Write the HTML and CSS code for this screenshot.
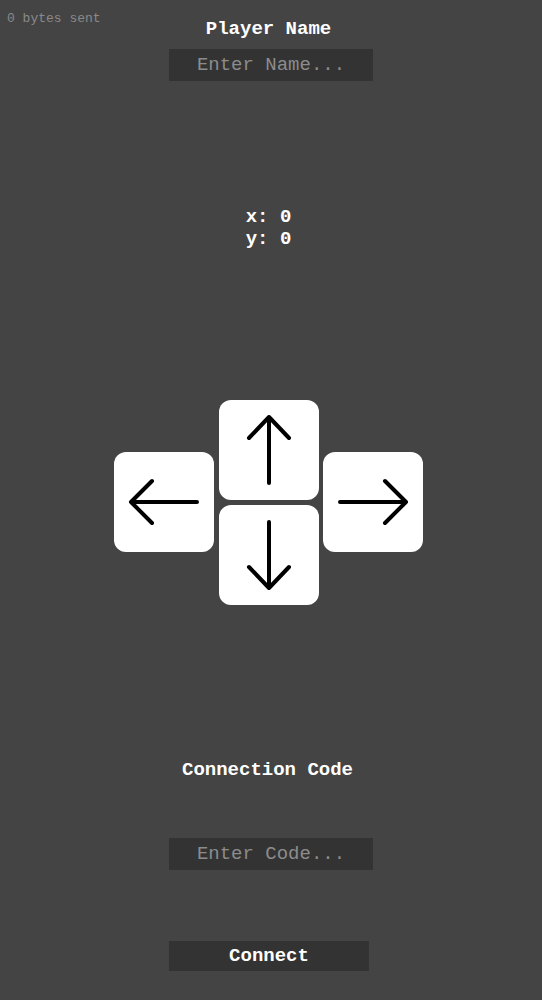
FILE: index.html
```html
<!DOCTYPE html>
<html>
<head>
<meta charset="utf-8">
<link rel="stylesheet" href="styles.css">
</head>
<body>
<div class="bytes">0 bytes sent</div>
<main class="page">
  <section class="group name-group">
    <div class="label">Player Name</div>
    <input class="field" type="text" placeholder="Enter Name...">
  </section>
  <section class="coords">
    <div>x: 0</div>
    <div>y: 0</div>
  </section>
  <section class="pad">
    <div class="col side">
      <button class="key" aria-label="left">
        <svg viewBox="0 0 100 100"><path d="M83 50H17M38 29L17 50L38 71"/></svg>
      </button>
    </div>
    <div class="col mid">
      <button class="key" aria-label="up">
        <svg viewBox="0 0 100 100"><path d="M50 83V17M30 38L50 17L70 38"/></svg>
      </button>
      <button class="key" aria-label="down">
        <svg viewBox="0 0 100 100"><path d="M50 17V83M30 62L50 83L70 62"/></svg>
      </button>
    </div>
    <div class="col side">
      <button class="key" aria-label="right">
        <svg viewBox="0 0 100 100"><path d="M17 50H83M62 29L83 50L62 71"/></svg>
      </button>
    </div>
  </section>
  <section class="group code-group">
    <div class="label code-label">Connection Code</div>
    <input class="field code-field" type="text" placeholder="Enter Code...">
    <button class="connect">Connect</button>
  </section>
</main>
</body>
</html>
```
FILE: styles.css
```css
html, body {
  margin: 0;
  padding: 0;
  background: #444444;
  font-family: "Liberation Mono", "Courier New", monospace;
  color: #ffffff;
}
body {
  width: 542px;
  height: 1000px;
  position: relative;
  overflow: hidden;
}
.bytes {
  position: absolute;
  left: 7px;
  top: 11px;
  font-size: 13px;
  line-height: 16px;
  color: #8a8a8a;
}
.page {
  display: flex;
  flex-direction: column;
  align-items: center;
  padding-top: 18px;
}
.group {
  display: flex;
  flex-direction: column;
  align-items: center;
}
.label {
  font-size: 19px;
  line-height: 22px;
  font-weight: bold;
  margin-left: -5px;
}
.code-label {
  margin-left: -7px;
}
.field {
  box-sizing: border-box;
  width: 204px;
  height: 32px;
  margin-top: 9px;
  margin-left: 0;
  border: none;
  outline: none;
  background: #333333;
  color: #ffffff;
  font-family: "Liberation Mono", "Courier New", monospace;
  font-size: 19px;
  text-align: center;
  padding: 0;
}
.field::placeholder {
  color: #8c8c8c;
}
.coords {
  margin-top: 125px;
  font-size: 19px;
  line-height: 22px;
  font-weight: bold;
  margin-left: -5px;
}
.pad {
  display: flex;
  gap: 5px;
  margin-top: 150px;
  margin-left: -6px;
  align-items: flex-start;
}
.col {
  display: flex;
  flex-direction: column;
  gap: 5px;
}
.side {
  margin-top: 52px;
}
.mid {
  margin-right: -1px;
}
.key {
  width: 100px;
  height: 100px;
  border: none;
  border-radius: 12px;
  background: #ffffff;
  padding: 0;
  display: flex;
  align-items: center;
  justify-content: center;
}
.key svg {
  width: 100px;
  height: 100px;
  fill: none;
  stroke: #000000;
  stroke-width: 4;
  stroke-linecap: round;
  stroke-linejoin: round;
}
.code-group {
  margin-top: 154px;
}
.code-field {
  margin-top: 57px;
}
.connect {
  margin-top: 71px;
  margin-left: -4px;
  width: 200px;
  height: 30px;
  border: none;
  background: #333333;
  color: #ffffff;
  font-family: "Liberation Mono", "Courier New", monospace;
  font-size: 19px;
  font-weight: bold;
  padding: 0;
}
```
